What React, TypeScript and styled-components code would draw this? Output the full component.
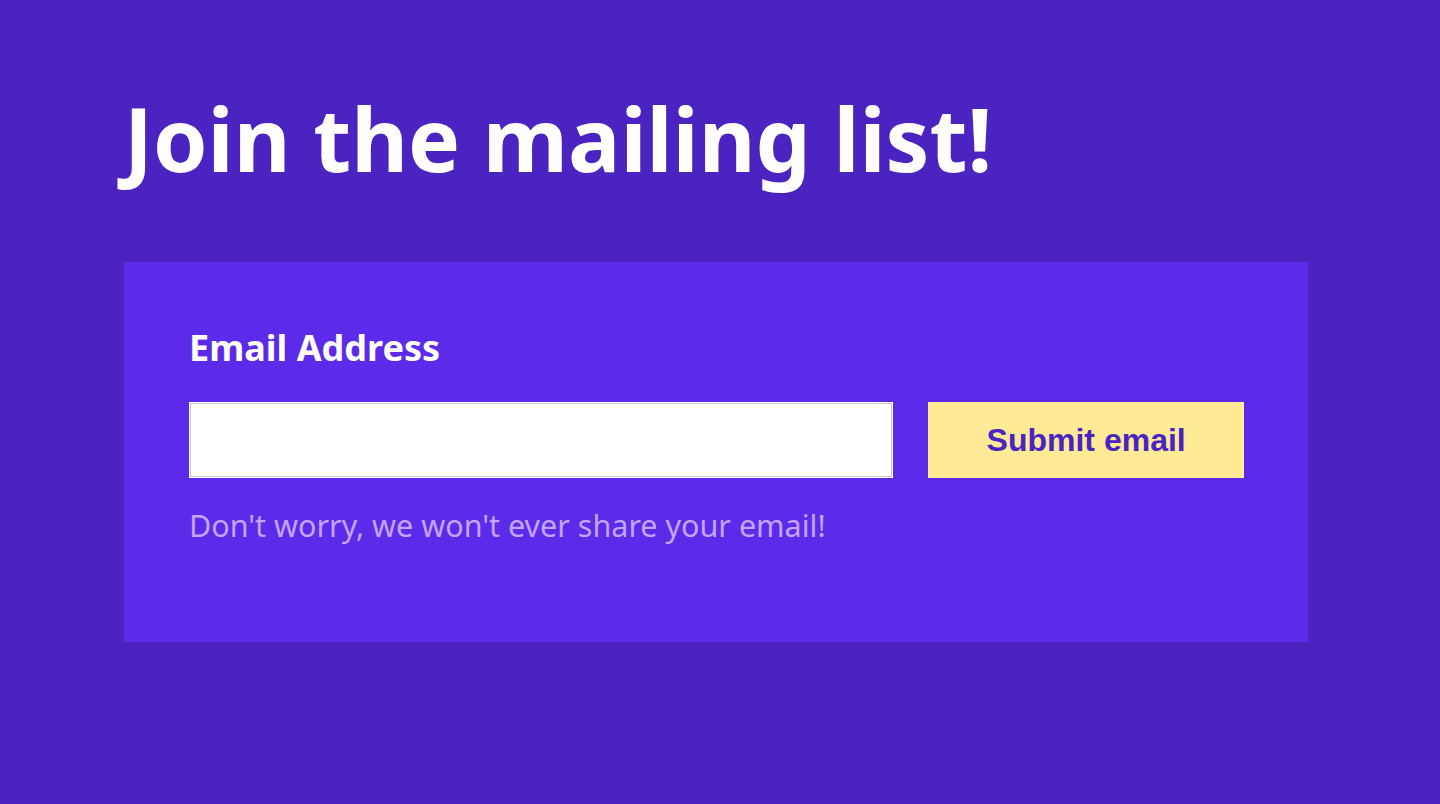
import React from "react";
import styled, { createGlobalStyle } from "styled-components";

const Global = createGlobalStyle`
  html, body {
    margin: 0;
    padding: 0;
    background: #4a23c1;
  }
  body {
    font-family: "Noto Sans", "Open Sans", sans-serif;
  }
`;

const Page = styled.main`
  min-height: 804px;
  box-sizing: border-box;
  background: #4a23c1;
  padding: 81px 0 0 124px;
  display: flex;
  flex-direction: column;
  align-items: flex-start;
`;

const Heading = styled.h1`
  margin: 0;
  color: #ffffff;
  font-family: "Noto Sans", sans-serif;
  font-weight: 700;
  font-size: 87.4px;
  line-height: 115px;
`;

const Panel = styled.form`
  margin-top: 66px;
  width: 1184px;
  height: 380px;
  box-sizing: border-box;
  background: #5b2be9;
  padding: 62px 64px 0 65px;
  display: flex;
  flex-direction: column;
`;

const Label = styled.label`
  color: #ffffff;
  font-family: "Noto Sans", sans-serif;
  font-weight: 700;
  font-size: 36px;
  line-height: 48px;
`;

const Row = styled.div`
  margin-top: 30px;
  display: flex;
  gap: 35px;
`;

const Input = styled.input`
  width: 705px;
  height: 76px;
  box-sizing: border-box;
  margin: 0;
  background: #ffffff;
  border: 1px solid #ffffff;
  box-shadow: inset 0 0 0 1px #c6c6ce;
  outline: none;
`;

const Button = styled.button`
  width: 316px;
  height: 76px;
  margin: 0;
  border: none;
  background: #ffeb96;
  color: #4a24c2;
  font-family: "Liberation Sans", Arial, sans-serif;
  font-weight: 700;
  font-size: 32px;
  cursor: pointer;
`;

const Hint = styled.p`
  margin: 27px 0 0;
  color: #c3a4ff;
  font-family: "Noto Sans", sans-serif;
  font-weight: 400;
  font-size: 30.5px;
  line-height: 40px;
`;

export default function App() {
  return (
    <>
      <Global />
      <Page>
        <Heading>Join the mailing list!</Heading>
        <Panel onSubmit={(e) => e.preventDefault()}>
          <Label htmlFor="email">Email Address</Label>
          <Row>
            <Input id="email" type="email" />
            <Button type="submit">Submit email</Button>
          </Row>
          <Hint>Don't worry, we won't ever share your email!</Hint>
        </Panel>
      </Page>
    </>
  );
}
